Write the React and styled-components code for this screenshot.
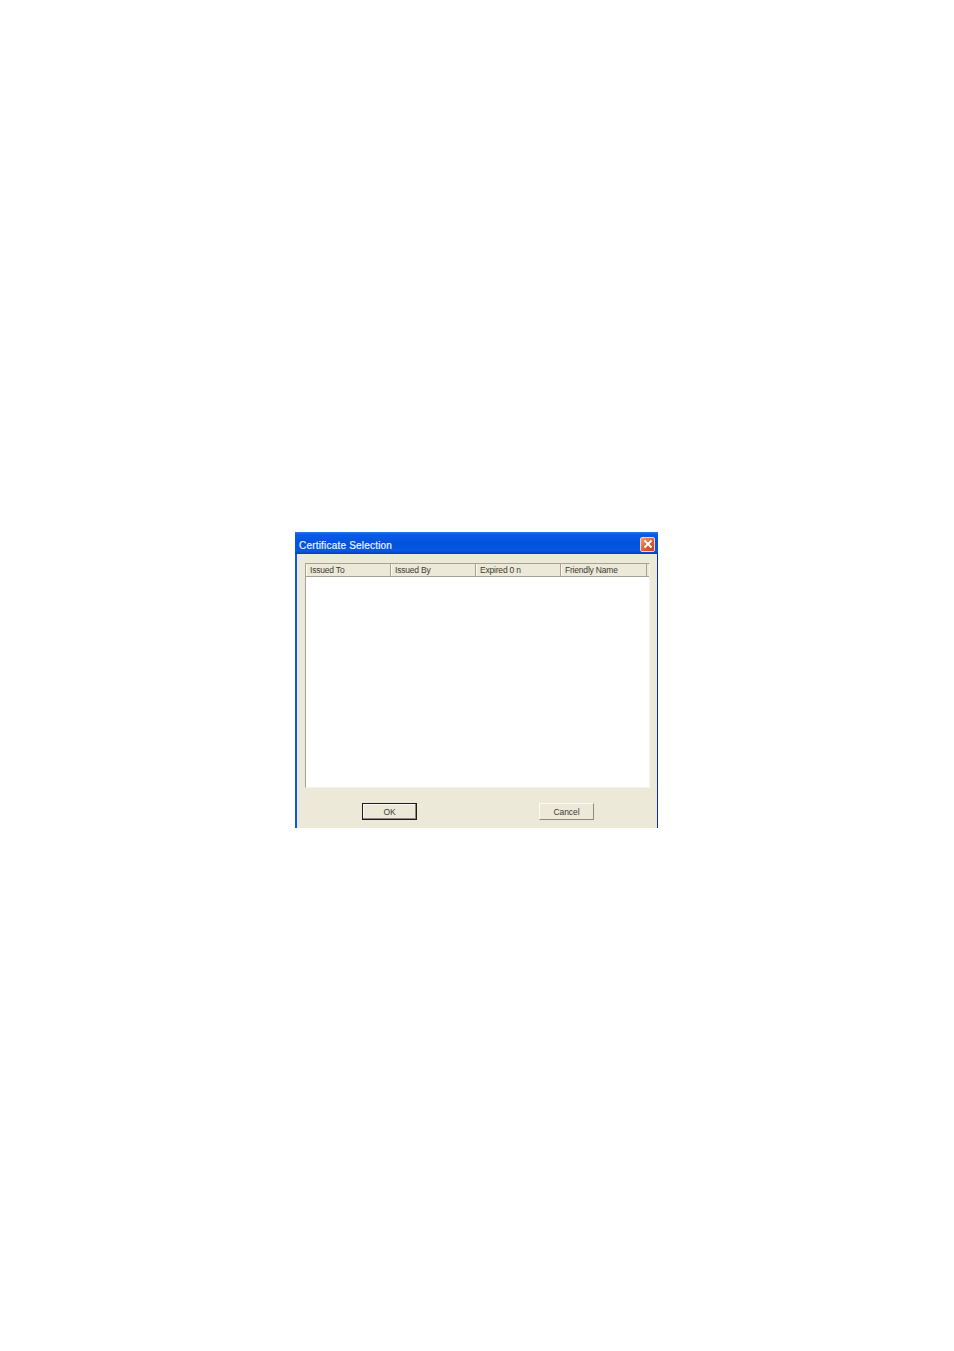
import React from "react";
import styled, { createGlobalStyle } from "styled-components";

const Global = createGlobalStyle`
  html, body { margin: 0; padding: 0; background: #fff; }
`;

const Page = styled.div`
  width: 954px;
  height: 1351px;
  box-sizing: border-box;
  padding: 532px 0 0 295px;
  font-family: "Liberation Sans", Arial, sans-serif;
`;

const Dialog = styled.div`
  width: 363px;
  height: 296px;
  box-sizing: border-box;
  display: flex;
  flex-direction: column;
  background: #ece9d8;
  border-left: 2px solid #0a5ae6;
  border-right: 1px solid #0a2f9c;
`;

const TitleBar = styled.div`
  height: 22px;
  margin-left: -2px;
  margin-right: -1px;
  box-sizing: border-box;
  padding: 1px 2px 0 4px;
  display: flex;
  align-items: center;
  justify-content: space-between;
  background: linear-gradient(to bottom, #2f78ea 0%, #0a5cea 10%, #0352dc 50%, #0358e4 85%, #0342b8 100%);
`;

const Title = styled.span`
  color: #eef3ff;
  font-size: 10px;
  line-height: 12px;
  padding-top: 4px;
  letter-spacing: 0.2px;
  -webkit-text-stroke: 0.2px #eef3ff;
`;

const CloseButton = styled.div`
  width: 15px;
  height: 15px;
  margin: 1px 1px 0 0;
  box-sizing: border-box;
  display: flex;
  align-items: center;
  justify-content: center;
  border: 1px solid #f3d3c6;
  border-radius: 2px;
  background: linear-gradient(135deg, #ee9a78, #dc5a30 60%, #c8401c);
`;

const Body = styled.div`
  flex: 1;
  display: flex;
  flex-direction: column;
  padding: 9px 7px 8px 8px;
  min-height: 0;
`;

const ListView = styled.div`
  height: 225px;
  box-sizing: border-box;
  background: #fff;
  border-top: 1px solid #a5a294;
  border-left: 1px solid #a5a294;
  border-right: 1px solid #f6f4ea;
  border-bottom: 1px solid #f6f4ea;
`;

const Header = styled.div`
  display: flex;
  height: 13px;
  background: #ece9d8;
  box-sizing: border-box;
  border-bottom: 1px solid #a5a294;
`;

const HeaderCell = styled.div`
  width: ${(p) => p.$w}px;
  box-sizing: border-box;
  padding: 1px 0 0 4px;
  font-size: 8.5px;
  line-height: 11px;
  letter-spacing: -0.2px;
  color: #3a3a36;
  border-right: 1px solid #a5a294;
  box-shadow: inset 1px 0 0 #fbfaf3;
  white-space: pre;
`;

const Actions = styled.div`
  display: flex;
  padding: 15px 0 0 57px;
  gap: 122px;
`;

const Button = styled.div`
  width: 55px;
  height: 17px;
  box-sizing: border-box;
  display: flex;
  align-items: center;
  justify-content: center;
  font-size: 8.5px;
  letter-spacing: -0.1px;
  color: #3a3a36;
  background: #ece9d8;
  border: 1px solid;
  border-color: ${(p) =>
    p.$default ? "#1c1c1c" : "#fbfaf3 #8c8a7c #8c8a7c #fbfaf3"};
  box-shadow: ${(p) =>
    p.$default ? "inset -1px -1px 0 #8c8a7c, inset 1px 1px 0 #fbfaf3" : "none"};
`;

const columns = [
  ["Issued To", 85],
  ["Issued By", 85],
  ["Expired 0 n", 85],
  ["Friendly Name", 86],
];

export default function App() {
  return (
    <>
      <Global />
      <Page>
        <Dialog>
          <TitleBar>
            <Title>Certificate Selection</Title>
            <CloseButton>
              <svg width="10" height="10" viewBox="0 0 10 10">
                <path d="M1.5 1.5 L8.5 8.5 M8.5 1.5 L1.5 8.5" stroke="#fff" strokeWidth="1.8" />
              </svg>
            </CloseButton>
          </TitleBar>
          <Body>
            <ListView>
              <Header>
                {columns.map(([label, w]) => (
                  <HeaderCell key={label} $w={w}>{label}</HeaderCell>
                ))}
              </Header>
            </ListView>
            <Actions>
              <Button $default>OK</Button>
              <Button>Cancel</Button>
            </Actions>
          </Body>
        </Dialog>
      </Page>
    </>
  );
}
